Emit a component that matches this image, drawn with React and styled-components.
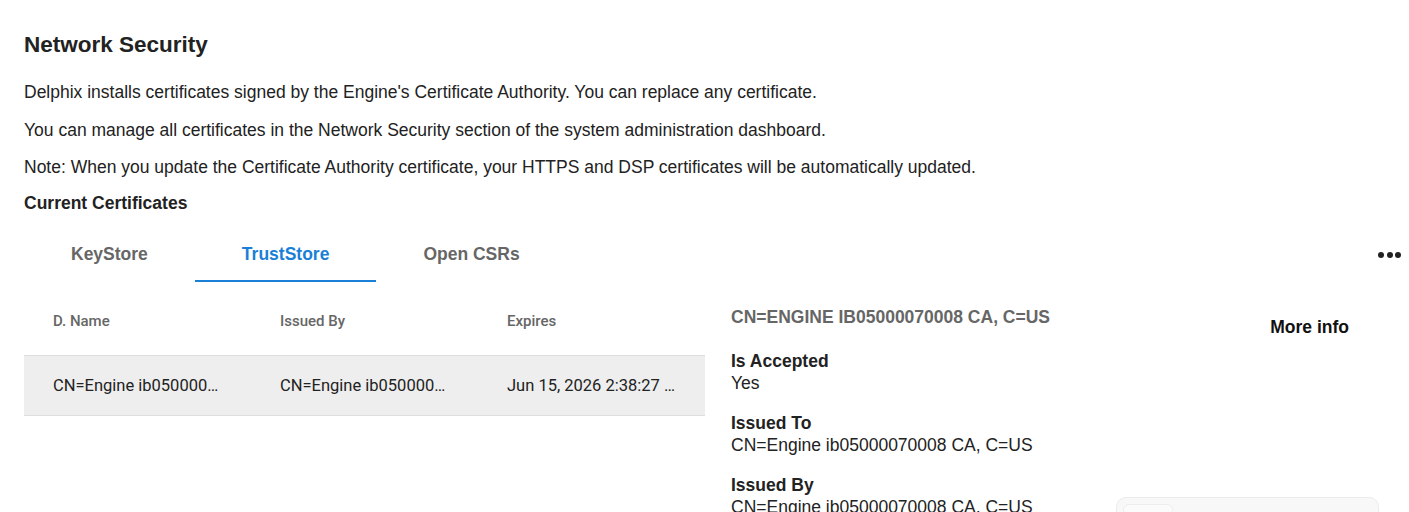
import React, { useState } from "react";
import styled, { createGlobalStyle } from "styled-components";

const GlobalStyle = createGlobalStyle`
  html, body {
    margin: 0;
    padding: 0;
    background: #fff;
  }
  body {
    font-family: "Liberation Sans", Arial, sans-serif;
    color: #222;
  }
`;

const Page = styled.div`
  padding: 33px 8px 0 24px;
  height: 512px;
  box-sizing: border-box;
  overflow: hidden;
`;

const Title = styled.h1`
  margin: 0 0 24px;
  font-size: 22.5px;
  line-height: 24px;
  font-weight: bold;
  color: #222;
`;

const Intro = styled.div`
  display: flex;
  flex-direction: column;
  gap: 15.5px;
  p {
    margin: 0;
    font-size: 17.5px;
    line-height: 22px;
  }
`;

const SubTitle = styled.h2`
  margin: 14px 0 0;
  font-size: 17.5px;
  line-height: 22px;
  font-weight: bold;
`;

const TabsRow = styled.div`
  display: flex;
  align-items: center;
  justify-content: space-between;
`;

const Tabs = styled.div`
  display: flex;
`;

const Tab = styled.button`
  border: none;
  background: none;
  font-family: "Liberation Sans", Arial, sans-serif;
  font-size: 17.5px;
  font-weight: bold;
  line-height: 20px;
  padding: 30px 47px 16px;
  color: ${(props) => (props.active ? "#1a7fd7" : "#666")};
  border-bottom: 2px solid ${(props) => (props.active ? "#1a7fd7" : "transparent")};
  cursor: pointer;
`;

const MoreBtn = styled.button`
  border: none;
  background: none;
  padding: 14px 0 0;
  display: flex;
  gap: 2.5px;
  span {
    width: 6px;
    height: 6px;
    border-radius: 50%;
    background: #222;
  }
`;

const Body = styled.div`
  display: flex;
  margin-top: 9px;
`;

const Table = styled.div`
  width: 681px;
  flex-shrink: 0;
  font-family: Roboto, "Liberation Sans", sans-serif;
`;

const HeadRow = styled.div`
  display: grid;
  grid-template-columns: repeat(3, 227px);
  height: 64px;
  align-items: center;
  div {
    padding: 0 29px 4px;
    font-size: 15px;
    font-weight: 500;
    color: #666;
  }
`;

const Row = styled.div`
  display: grid;
  grid-template-columns: repeat(3, 227px);
  height: 59px;
  align-items: center;
  background: ${(props) => (props.selected ? "#eeeeee" : "#fff")};
  border-top: 1px solid #dedede;
  border-bottom: 1px solid #dedede;
  div {
    padding: 0 29px;
    font-size: 16.5px;
    color: #222;
    white-space: nowrap;
    overflow: hidden;
    text-overflow: ellipsis;
  }
`;

const Detail = styled.div`
  flex: 1;
  padding: 15px 0 0 26px;
`;

const DetailTitle = styled.div`
  font-size: 17.5px;
  font-weight: bold;
  line-height: 22px;
  color: #666;
  margin-bottom: 22px;
`;

const Fields = styled.dl`
  margin: 0;
`;

const Field = styled.div`
  margin-bottom: 18px;
  line-height: 22px;
  dt {
    font-size: 17.5px;
    font-weight: bold;
    color: #222;
  }
  dd {
    margin: 0;
    font-size: 17.5px;
    color: #222;
  }
`;

const Side = styled.div`
  width: 263px;
  margin-right: 22px;
  display: flex;
  flex-direction: column;
`;

const SideTitle = styled.div`
  text-align: right;
  padding: 25px 30px 0 0;
  font-size: 17.5px;
  font-weight: bold;
  line-height: 22px;
  color: #111;
`;

const Card = styled.div`
  margin-top: 159px;
  height: 80px;
  background: #f8f8f8;
  border: 1px solid #ebebeb;
  border-radius: 10px;
  padding: 6px;
  box-sizing: border-box;
`;

const CardInner = styled.div`
  width: 48px;
  height: 60px;
  background: #fbfbfb;
  border: 1px solid #eeeeee;
  border-radius: 6px;
`;

const rows = [
  {
    name: "CN=Engine ib05000070008 CA, C=US",
    issuer: "CN=Engine ib05000070008 CA, C=US",
    expires: "Jun 15, 2026 2:38:27 PM",
  },
];

export default function App() {
  const [tab, setTab] = useState("TrustStore");
  return (
    <>
      <GlobalStyle />
      <Page>
        <Title>Network Security</Title>
        <Intro>
          <p>
            Delphix installs certificates signed by the Engine's Certificate
            Authority. You can replace any certificate.
          </p>
          <p>
            You can manage all certificates in the Network Security section of
            the system administration dashboard.
          </p>
          <p>
            Note: When you update the Certificate Authority certificate, your
            HTTPS and DSP certificates will be automatically updated.
          </p>
        </Intro>
        <SubTitle>Current Certificates</SubTitle>
        <TabsRow>
          <Tabs>
            {["KeyStore", "TrustStore", "Open CSRs"].map((t) => (
              <Tab key={t} active={tab === t} onClick={() => setTab(t)}>
                {t}
              </Tab>
            ))}
          </Tabs>
          <MoreBtn aria-label="more">
            <span />
            <span />
            <span />
          </MoreBtn>
        </TabsRow>
        <Body>
          <Table>
            <HeadRow>
              <div>D. Name</div>
              <div>Issued By</div>
              <div>Expires</div>
            </HeadRow>
            {rows.map((r) => (
              <Row key={r.name} selected>
                <div>{r.name}</div>
                <div>{r.issuer}</div>
                <div>{r.expires}</div>
              </Row>
            ))}
          </Table>
          <Detail>
            <DetailTitle>CN=ENGINE IB05000070008 CA, C=US</DetailTitle>
            <Fields>
              <Field>
                <dt>Is Accepted</dt>
                <dd>Yes</dd>
              </Field>
              <Field>
                <dt>Issued To</dt>
                <dd>CN=Engine ib05000070008 CA, C=US</dd>
              </Field>
              <Field>
                <dt>Issued By</dt>
                <dd>CN=Engine ib05000070008 CA, C=US</dd>
              </Field>
            </Fields>
          </Detail>
          <Side>
            <SideTitle>More info</SideTitle>
            <Card>
              <CardInner />
            </Card>
          </Side>
        </Body>
      </Page>
    </>
  );
}
